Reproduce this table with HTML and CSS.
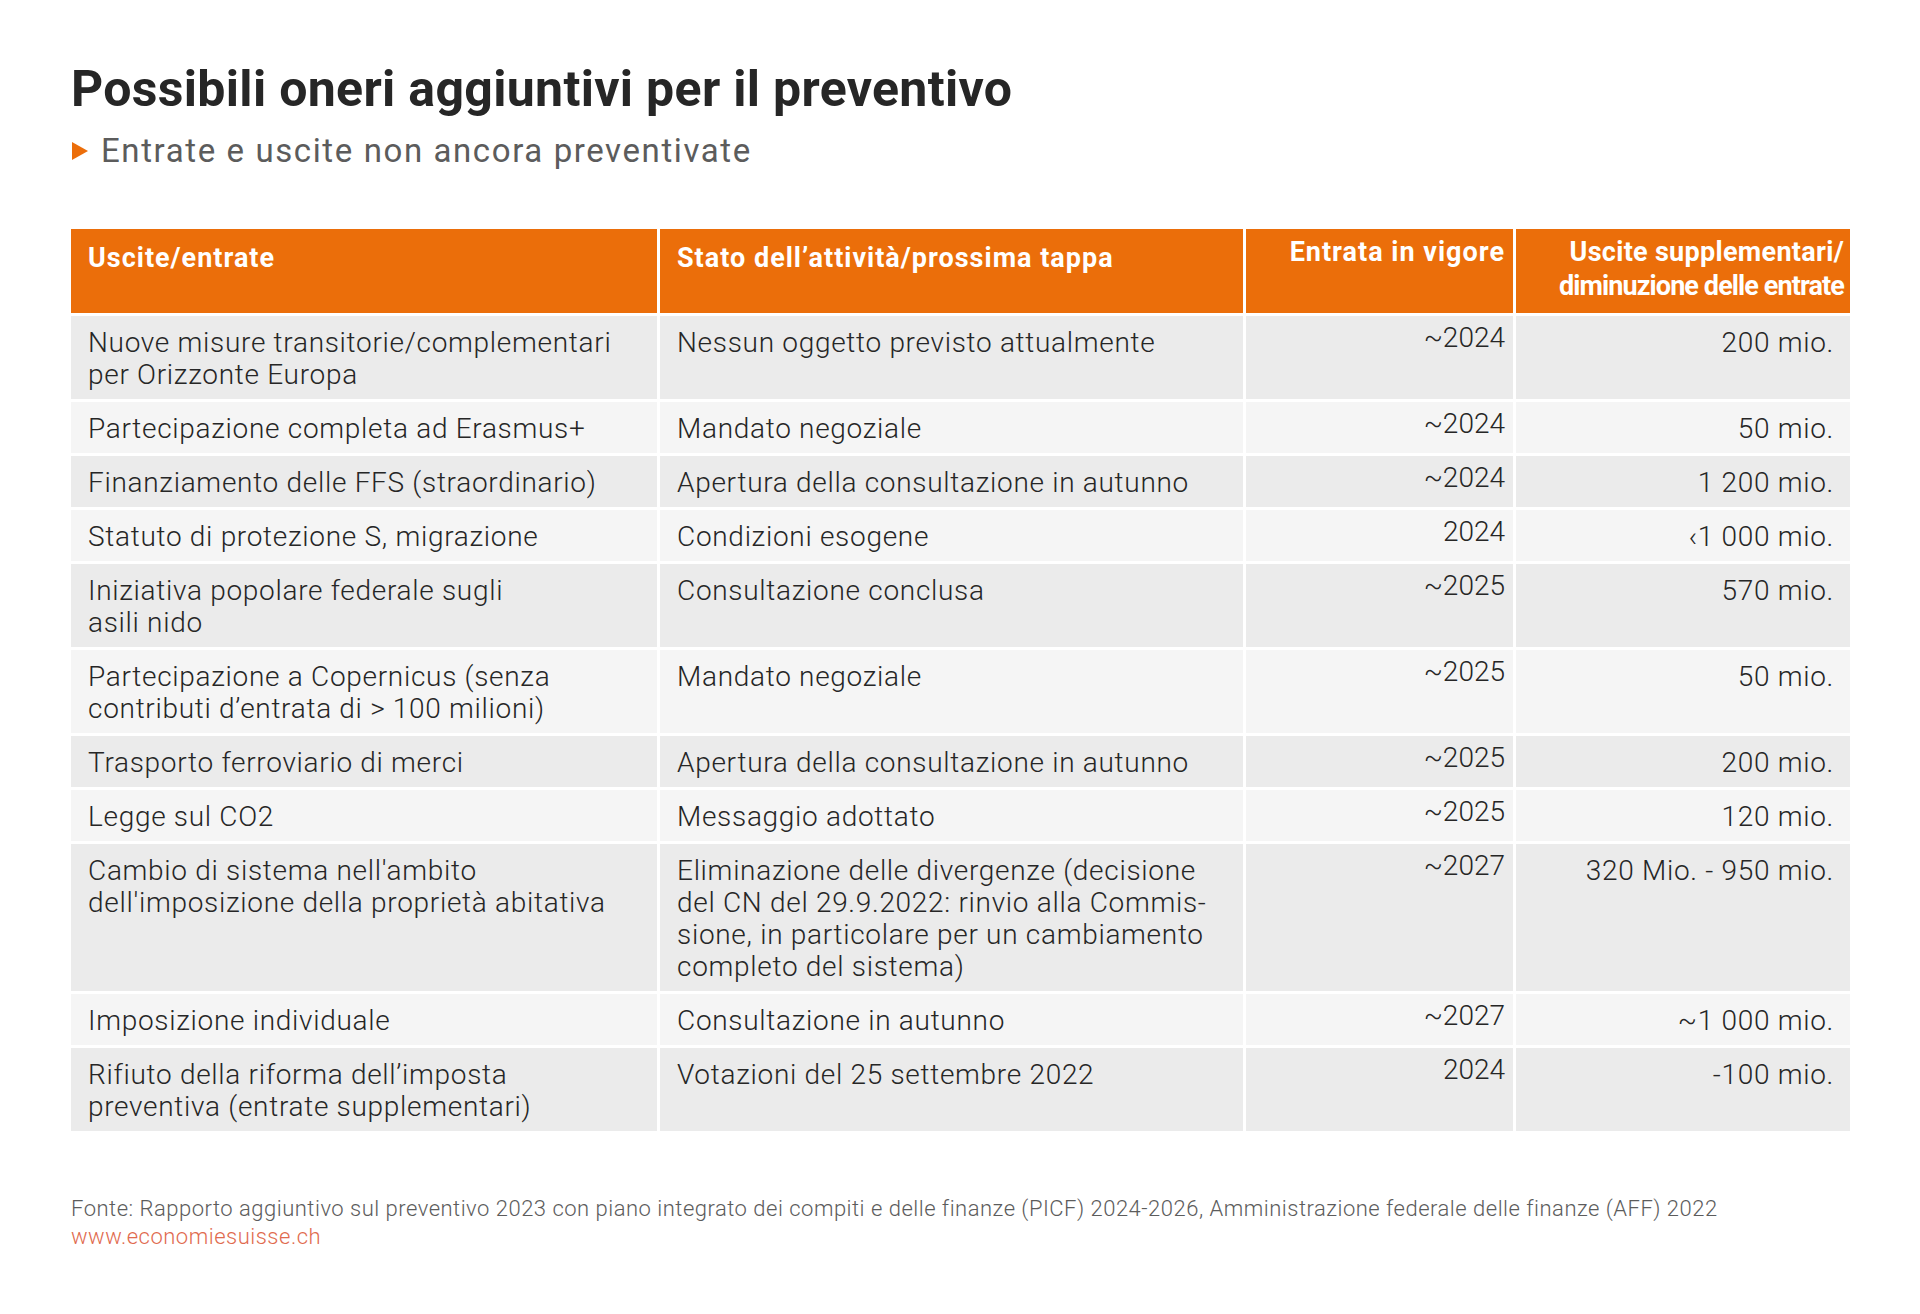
FILE: index.html
```html
<!DOCTYPE html>
<html lang="it">
<head>
<meta charset="utf-8">
<title>Possibili oneri aggiuntivi per il preventivo</title>
<link rel="stylesheet" href="styles.css">
</head>
<body>
<div class="page">
  <h1 class="title">Possibili oneri aggiuntivi per il preventivo</h1>
  <p class="subtitle"><span class="arrow"></span>Entrate e uscite non ancora preventivate</p>

  <table class="data">
    <thead>
      <tr>
        <th class="c1">Uscite/entrate</th>
        <th class="c2">Stato dell’attività/prossima tappa</th>
        <th class="c3">Entrata in vigore</th>
        <th class="c4"><span class="h-wide">Uscite supplementari/</span><br><span class="h-tight">diminuzione delle entrate</span></th>
      </tr>
    </thead>
    <tbody>
      <tr class="odd">
        <td class="c1">Nuove misure transitorie/complementari<br>per Orizzonte Europa</td>
        <td class="c2">Nessun oggetto previsto attualmente</td>
        <td class="c3">~2024</td>
        <td class="c4">200 mio.</td>
      </tr>
      <tr class="even">
        <td class="c1">Partecipazione completa ad Erasmus+</td>
        <td class="c2">Mandato negoziale</td>
        <td class="c3">~2024</td>
        <td class="c4">50 mio.</td>
      </tr>
      <tr class="odd">
        <td class="c1">Finanziamento delle FFS (straordinario)</td>
        <td class="c2">Apertura della consultazione in autunno</td>
        <td class="c3">~2024</td>
        <td class="c4">1 200 mio.</td>
      </tr>
      <tr class="even">
        <td class="c1">Statuto di protezione S, migrazione</td>
        <td class="c2">Condizioni esogene</td>
        <td class="c3">2024</td>
        <td class="c4">‹1 000 mio.</td>
      </tr>
      <tr class="odd">
        <td class="c1">Iniziativa popolare federale sugli<br>asili nido</td>
        <td class="c2">Consultazione conclusa</td>
        <td class="c3">~2025</td>
        <td class="c4">570 mio.</td>
      </tr>
      <tr class="even">
        <td class="c1">Partecipazione a Copernicus (senza<br>contributi d’entrata di &gt; 100 milioni)</td>
        <td class="c2">Mandato negoziale</td>
        <td class="c3">~2025</td>
        <td class="c4">50 mio.</td>
      </tr>
      <tr class="odd">
        <td class="c1">Trasporto ferroviario di merci</td>
        <td class="c2">Apertura della consultazione in autunno</td>
        <td class="c3">~2025</td>
        <td class="c4">200 mio.</td>
      </tr>
      <tr class="even">
        <td class="c1">Legge sul CO2</td>
        <td class="c2">Messaggio adottato</td>
        <td class="c3">~2025</td>
        <td class="c4">120 mio.</td>
      </tr>
      <tr class="odd">
        <td class="c1">Cambio di sistema nell'ambito<br>dell'imposizione della proprietà abitativa</td>
        <td class="c2">Eliminazione delle divergenze (decisione<br>del CN del 29.9.2022: rinvio alla Commis-<br>sione, in particolare per un cambiamento<br>completo del sistema)</td>
        <td class="c3">~2027</td>
        <td class="c4">320 Mio. - 950 mio.</td>
      </tr>
      <tr class="even">
        <td class="c1">Imposizione individuale</td>
        <td class="c2">Consultazione in autunno</td>
        <td class="c3">~2027</td>
        <td class="c4">~1 000 mio.</td>
      </tr>
      <tr class="odd">
        <td class="c1">Rifiuto della riforma dell’imposta<br>preventiva (entrate supplementari)</td>
        <td class="c2">Votazioni del 25 settembre 2022</td>
        <td class="c3">2024</td>
        <td class="c4">-100 mio.</td>
      </tr>
    </tbody>
  </table>

  <footer class="source">
    <p class="source-text">Fonte: Rapporto aggiuntivo sul preventivo 2023 con piano integrato dei compiti e delle finanze (PICF) 2024-2026, Amministrazione federale delle finanze (AFF) 2022</p>
    <p class="source-link">www.economiesuisse.ch</p>
  </footer>
</div>
</body>
</html>
```

FILE: styles.css
```css
* { box-sizing: border-box; }

html, body {
  margin: 0;
  padding: 0;
  background: #ffffff;
}

body {
  font-family: Roboto, "Liberation Sans", sans-serif;
  color: #262626;
}

.page {
  padding: 59px 70px 0 71px;
}

.title {
  margin: 0;
  font-size: 50px;
  line-height: 60px;
  font-weight: 700;
  color: #262626;
  letter-spacing: 0.32px;
}

.subtitle {
  display: flex;
  align-items: center;
  margin: 12px 0 0 0;
  font-size: 33px;
  line-height: 40px;
  font-weight: 400;
  color: #5c5c5c;
  letter-spacing: 1.6px;
}

.arrow {
  display: inline-block;
  width: 0;
  height: 0;
  border-top: 9px solid transparent;
  border-bottom: 9px solid transparent;
  border-left: 16px solid #ec6e0a;
  margin: 0 13px 0 1px;
}

.data {
  border-collapse: separate;
  border-spacing: 3px;
  margin: 55px -3px 0 -3px;
  width: calc(100% + 6px);
  table-layout: fixed;
}

.data th,
.data td {
  vertical-align: top;
  text-align: left;
}

.data th {
  background: #eb6e0a;
  color: #ffffff;
  font-weight: 700;
  font-size: 27px;
  line-height: 34px;
  letter-spacing: 1px;
  padding: 12px 17px 6px 17px;
  height: 84px;
}

.data td {
  font-weight: 300;
  font-size: 28px;
  line-height: 32px;
  letter-spacing: 0.7px;
  color: #262626;
  padding: 11px 17px 8px 17px;
}

.data tr.odd td { background: #ebebeb; }
.data tr.even td { background: #f5f5f5; }

.data .c1 { width: 586px; }
.data .c2 { width: 583px; }
.data .c3 { width: 267px; text-align: right; padding-right: 8px; }
.data .c4 { text-align: right; }

.data th.c3 { padding-top: 6px; }
.data td.c3 { padding-top: 6px; letter-spacing: 0; }
.data th.c4 { padding-top: 6px; padding-right: 6px; }
.data td.c4 { padding-right: 16px; }

.h-wide { letter-spacing: 0.3px; }
.h-tight { letter-spacing: -0.9px; }

.source {
  margin-top: 61px;
}

.source p {
  margin: 0;
  font-size: 22px;
  line-height: 28px;
  font-weight: 300;
  letter-spacing: 0.5px;
}

.source-text { color: #5c5c5c; }
.source-link { color: #df6a4e; }
```
